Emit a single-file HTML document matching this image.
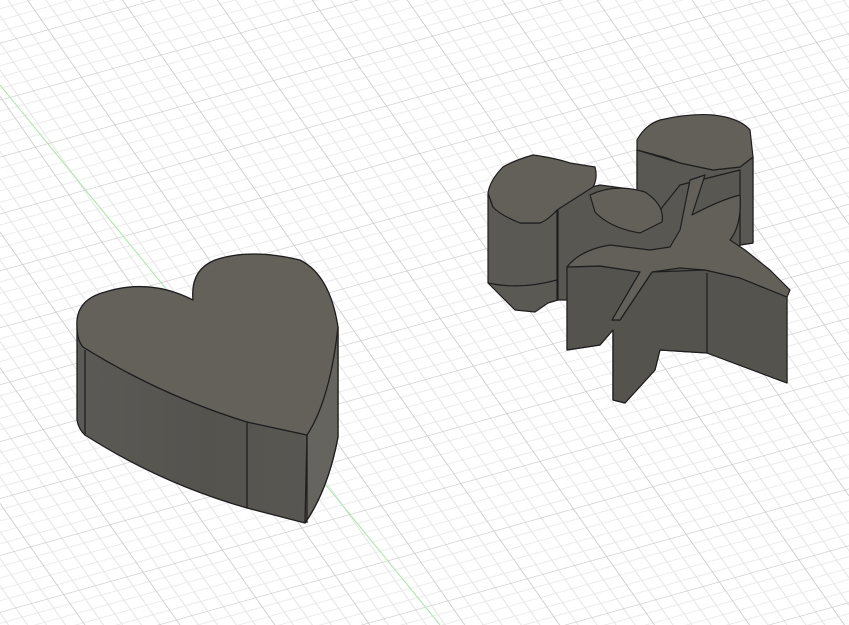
<!DOCTYPE html>
<html><head><style>html,body{margin:0;padding:0;background:#fff;overflow:hidden}svg{display:block}</style></head><body>
<svg width="849" height="625" viewBox="0 0 849 625" xmlns="http://www.w3.org/2000/svg">
<defs>
<pattern id="g" width="100" height="100" patternUnits="userSpaceOnUse" patternTransform="matrix(0.794,-0.222,0.333,0.476,47.7,29.6)">
<g stroke="#e6e6e6" stroke-width="1.4">
<path d="M20 0V100M40 0V100M60 0V100M80 0V100"/>
<path d="M0 20H100M0 40H100M0 60H100M0 80H100"/>
</g>
<g stroke="#c6c6c6" stroke-width="2"><path d="M0 0V100M0 0H100"/></g>
</pattern>
<linearGradient id="fr" x1="0" x2="1"><stop offset="0" stop-color="#5c5a55"/><stop offset="0.5" stop-color="#55534e"/><stop offset="1" stop-color="#5a5853"/></linearGradient>
</defs>
<rect width="849" height="625" fill="#fff"/>
<rect width="849" height="625" fill="url(#g)"/>
<line x1="0" y1="85" x2="440" y2="625" stroke="#a8e8a8" stroke-width="1"/>
<!-- heart -->
<g stroke="#1e1e1e" stroke-width="1.3" stroke-linejoin="round">
<path d="M77 327 L77 420 Q79 430 85 435 Q160 483 247 508 L305 523 Q328 490 338 437 L338 327 Q320 400 307 435 L247 422 Q160 395 83 347 Z" fill="url(#fr)"/>
<path d="M307 435 L305 523 Q328 490 338 437 L338 327 Z" fill="#66645e"/>
<path d="M77 327 Q75 300 105 292 Q150 278 193 300 Q190 270 215 260 Q250 248 300 260 Q330 275 338 327 Q330 400 307 435 L247 422 Q160 395 83 347 Q77 340 77 327 Z" fill="#64615b"/>
<path d="M85 350 V435 M247 422 V508 M307 435 V523" fill="none"/>
</g>
<!-- rose -->
<g stroke="#1e1e1e" stroke-width="1.2" stroke-linejoin="round">
<path d="M557 195 L600 185 L637 190 L637 150 L753 157 L753 243 L740 245 L740 255 L787 297 L787 383 L707 353 L660 350 L655 370 L625 403 L613 400 L613 330 L600 345 L567 350 L567 300 L557 300 Z" fill="#595752"/>
<path d="M488 193 L488 283 L497 292 L505 300 L515 310 L535 312 L548 303 L558 300 L558 210 L540 223 L520 223 L493 207 Z" fill="#5b5954"/>
<path d="M567 267 L567 350 L600 345 L613 330 L613 400 L625 403 L655 370 L660 350 L707 353 L787 383 L787 297 L740 278 L705 270 L652 272 L620 320 L612 320 L640 272 L600 266 Z" fill="#55534e"/>
<path d="M637 150 L637 200 L660 210 L680 185 L720 175 L740 170 L740 245 L753 243 L753 157 L740 167 L713 170 L680 163 Z" fill="#5a5853"/>
<path d="M590 195 Q615 183 645 192 Q665 205 662 222 L640 233 Q610 228 595 212 Z" fill="#63605a"/>
<path d="M488 193 Q490 180 503 167 Q515 160 533 155 Q555 158 570 163 L595 167 Q598 178 593 187 L557 210 Q548 220 540 223 L520 223 Q500 215 493 207 Z" fill="#63605a"/>
<path d="M637 140 Q645 125 660 120 Q690 113 713 115 Q740 118 750 130 L753 157 L740 167 L713 170 L680 163 L667 158 L637 150 Z" fill="#63605a"/>
<path d="M567 267 Q580 250 610 245 L650 250 L670 247 L680 230 L690 180 L705 175 L692 215 Q720 200 740 195 Q742 225 730 240 L745 250 L770 270 L790 290 L787 297 L740 278 L705 270 L680 268 L652 272 L620 320 L612 320 L640 272 L600 266 Z" fill="#63605a"/>
<path d="M613 330 V400 M707 353 V273 M557 210 V300 M488 283 Q520 290 557 280" fill="none"/>
</g>
</svg>
</body></html>
